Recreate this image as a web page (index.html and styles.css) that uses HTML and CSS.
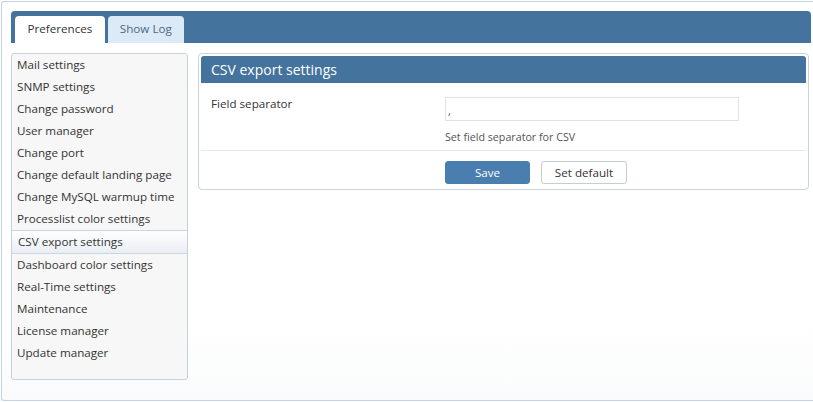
FILE: index.html
```html
<!DOCTYPE html>
<html>
<head>
<meta charset="utf-8">
<link rel="stylesheet" href="styles.css">
</head>
<body>
<div class="widget">
  <div class="tabbar">
    <div class="tab active">Preferences</div>
    <div class="tab">Show Log</div>
  </div>
  <div class="content">
    <ul class="menu">
      <li>Mail settings</li>
      <li>SNMP settings</li>
      <li>Change password</li>
      <li>User manager</li>
      <li>Change port</li>
      <li>Change default landing page</li>
      <li>Change MySQL warmup time</li>
      <li>Processlist color settings</li>
      <li class="selected">CSV export settings</li>
      <li>Dashboard color settings</li>
      <li>Real-Time settings</li>
      <li>Maintenance</li>
      <li>License manager</li>
      <li>Update manager</li>
    </ul>
    <div class="panel">
      <div class="panel-head">CSV export settings</div>
      <div class="form-row">
        <div class="label">Field separator</div>
        <div class="field">
          <div class="input">,</div>
          <div class="hint">Set field separator for CSV</div>
        </div>
      </div>
      <div class="footer">
        <button class="btn primary">Save</button>
        <button class="btn">Set default</button>
      </div>
    </div>
  </div>
</div>
</body>
</html>
```

FILE: styles.css
```css
html, body {
  margin: 0;
  padding: 0;
  background: #ffffff;
  font-family: "Open Sans", "DejaVu Sans", sans-serif;
  font-size: 11.65px;
  color: #333333;
}
.widget {
  margin: 1px 0 0 1px;
  border: 1px solid #c3d4e4;
  border-right: none;
  border-radius: 3px 0 0 3px;
  height: 389px;
  padding: 9px 2px 0 9px;
  background: linear-gradient(#ffffff 80%, #fafbfc);
}
.tabbar {
  height: 27px;
  background: #44739e;
  border-radius: 4px 4px 0 0;
  padding: 5px 0 0 4px;
  display: flex;
  gap: 3px;
}
.tab {
  height: 27px;
  line-height: 26px;
  font-size: 11.65px;
  padding: 0 12px;
  border-radius: 4px 4px 0 0;
  background: #dceaf8;
  color: #4a6886;
}
.tab.active {
  background: #ffffff;
  color: #333333;
  padding: 0 12.5px;
}
.content {
  display: flex;
  gap: 10px;
  margin-top: 10px;
  align-items: flex-start;
}
.menu {
  list-style: none;
  margin: 0;
  padding: 0 0 15px 0;
  width: 175px;
  height: 310px;
  background: #f7f7f7;
  border: 1px solid #c5d1dc;
  border-radius: 3px;
}
.menu li {
  height: 22px;
  line-height: 22px;
  padding-left: 5px;
  white-space: nowrap;
}
.menu li.selected {
  border-top: 1px solid #c9d7e5;
  border-bottom: 1px solid #c9d7e5;
  background: linear-gradient(#ffffff, #e9eef4);
  padding-left: 6px;
}
.panel {
  width: 605px;
  border: 1px solid #c8d3de;
  border-radius: 4px;
  padding: 2px;
  background: #ffffff;
}
.panel-head {
  height: 27px;
  line-height: 27px;
  background: #44739e;
  color: #ffffff;
  font-size: 14px;
  padding-left: 10px;
  border-radius: 3px 3px 0 0;
}
.form-row {
  display: flex;
  padding: 14px 0 5px 10px;
}
.label {
  width: 234px;
  line-height: 14px;
}
.field {
  display: flex;
  flex-direction: column;
}
.input {
  width: 290px;
  height: 22px;
  border: 1px solid #dde3ea;
  line-height: 26px;
  padding-left: 2px;
  color: #555;
  font-size: 11px;
}
.hint {
  margin-top: 8px;
  font-size: 10.7px;
  line-height: 16px;
  color: #555555;
}
.footer {
  border-top: 1px solid #e4e9ee;
  padding: 10px 0 3px 244px;
  display: flex;
  gap: 11px;
}
.btn {
  height: 23px;
  font-family: "Open Sans", "DejaVu Sans", sans-serif;
  font-size: 11.65px;
  border: 1px solid #c5ced8;
  border-radius: 3px;
  background: #ffffff;
  color: #333333;
  padding: 0;
  width: 86px;
  line-height: 21px;
}
.btn.primary {
  background: #4a7eaf;
  border-color: #4a7eaf;
  color: #ffffff;
  width: 85px;
}
```
